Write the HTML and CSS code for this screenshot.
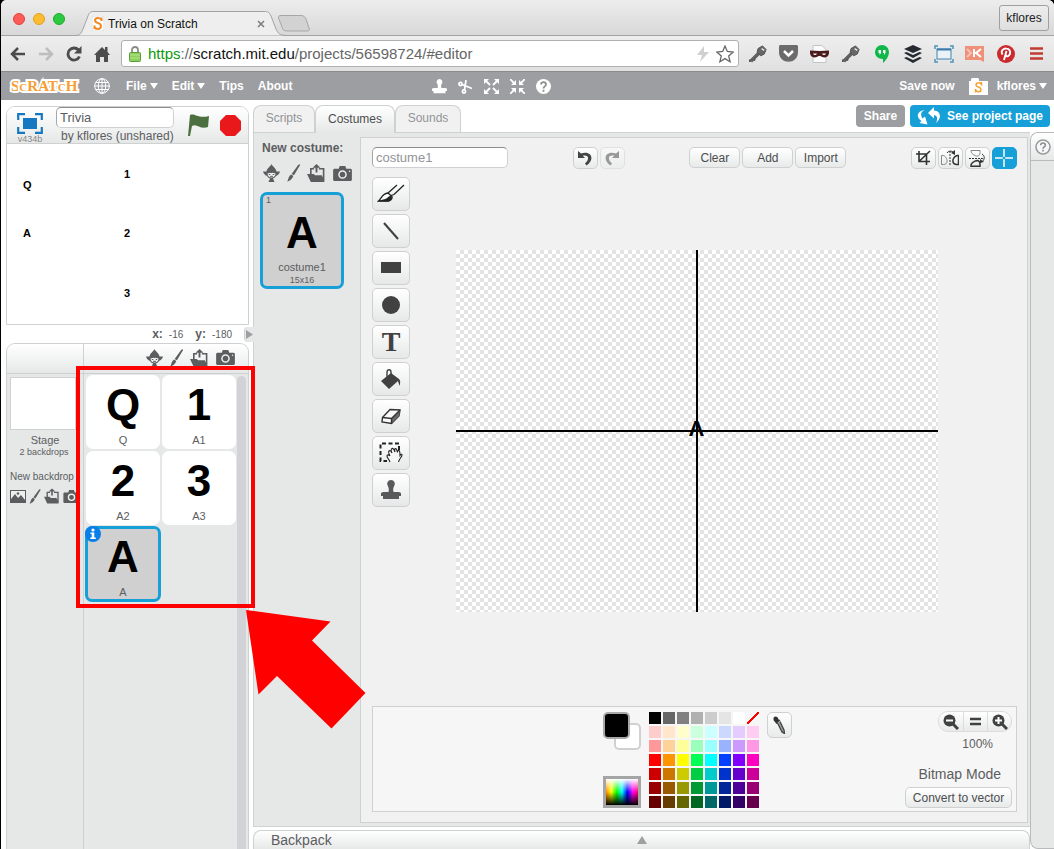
FILE: index.html
```html
<!DOCTYPE html>
<html lang="en">
<head>
<meta charset="utf-8">
<title>Trivia on Scratch</title>
<link rel="stylesheet" href="styles.css">
</head>
<body>
<svg class="defs" aria-hidden="true">
  <symbol id="face" viewBox="0 0 17 18"><path d="M8.500 0c1 2.500 4.500 4 5 7.500h3.500c-.5 2-2 3.500-4 4.500-1 1.500-2 2-3 2.500l1.500 3.500h-6L7 14.500C6 14 5 13.500 4 12 2 11 .5 9.500 0 7.500h3.500C4 4 7.500 2.500 8.500 0z" fill="#5c5d5f"/><path d="M4.500 9.500l3-.8 1 .6 1-.6 3 .8c0 2.700-2 4-4 4s-4-1.300-4-4z" fill="#f4f4f4"/><path d="M5.800 10.500h1.500M9.700 10.500h1.500M7 12.300h3" stroke="#5c5d5f"/></symbol>
  <symbol id="brush" viewBox="0 0 14 19"><path d="M13.500 0c.6.2.7.8.3 1.500L7.500 12 5 10.500 12 1z M4.500 11l2.300 1.600C6 15.500 3.500 17.500 0 19c1.500-2 1.500-6.500 4.500-8z" fill="#5c5d5f"/></symbol>
  <symbol id="upload" viewBox="0 0 20 19"><path d="M7.500 5H4v6M12.500 5H17.500v12" fill="none" stroke="#5c5d5f" stroke-width="1.700"/><path d="M10 0l4.200 4H11v5H9V4H5.800z" fill="#5c5d5f"/><path d="M0 10.500h7l1.500 1.500H15.500l2.800 5v2H4z" fill="#5c5d5f"/></symbol>
  <symbol id="camera" viewBox="0 0 20 16"><path d="M1 3h5l1-3h6l1 3h5l1 1v11l-1 1H1l-1-1V4z" fill="#5c5d5f"/><circle cx="10" cy="9" r="3.800" fill="none" stroke="#eee" stroke-width="1.600"/><circle cx="17.500" cy="5.500" r=".8" fill="#eee"/></symbol>
  <symbol id="stamp" viewBox="0 0 20 20"><path d="M10 0a4 4 0 0 1 3 6.500c-1 1.500-1 3-.5 5.500H18l2 1v3h-2v3H2v-3H0v-3l2-1h5.500c.5-2.500.5-4-.5-5.500A4 4 0 0 1 10 0z" fill="currentColor"/></symbol>
  <symbol id="key" viewBox="0 0 20 20"><path d="M2 18L12 8" stroke="#606060" stroke-width="4"/><path d="M10 4l5-3 4 4-2 5-4 2-4-4z" fill="#666" stroke="#4e4e4e"/><path d="M14 4l3 2" stroke="#e6e6e6" stroke-width="1.500"/><path d="M1 19v-3M5 16l2 1" stroke="#555" stroke-width="2"/></symbol>
</svg>

<header class="tabstrip">
  <div class="lights"><i class="red"></i><i class="yellow"></i><i class="green"></i></div>
  <div class="browser-tab">
    <svg class="tab-shape" viewBox="0 0 212 25" preserveAspectRatio="none"><path d="M0 24.500C6 24.500 6 22 8 18L13 5C14 1 16 .5 19 .5H189C193 .5 194 1 196 5L201 18C203 22 204 24.500 212 24.500" fill="#eeeeee" stroke="#a3a3a3"/></svg>
    <svg class="favicon" viewBox="0 0 12 15"><rect width="12" height="15" rx="2" fill="#fff" stroke="#ddd"/><path d="M9.500 1.500V5M9.500 4C8 1 3 1.500 3 4.500c0 3.500 6 1.500 6 5.500 0 3.500-5 4-6.500 1M2.500 9.500V13" fill="none" stroke="#f08b27" stroke-width="2"/></svg>
    <span>Trivia on Scratch</span>
    <button class="tab-close" aria-label="Close tab"><svg viewBox="0 0 8 8"><path d="M1 1l6 6M7 1L1 7" stroke="#7a7a7a" stroke-width="1.500"/></svg></button>
  </div>
  <button class="new-tab" aria-label="New tab"><svg viewBox="0 0 34 17"><path d="M4 .5H24C27 .5 28 2 29 4L32 13C33 15 32 16 30 16H10C7 16 6 15 5 12L1.500 3C1 1 2 .5 4 .5z" fill="#d2d2d2" stroke="#a6a6a6"/></svg></button>
  <button class="profile">kflores</button>
</header>

<nav class="toolbar">
  <button class="nav-btn" aria-label="Back"><svg width="16" height="14" viewBox="0 0 16 14"><path d="M8 1L2 7l6 6M2 7h13" fill="none" stroke="#4c4c4c" stroke-width="2.500"/></svg></button>
  <button class="nav-btn" aria-label="Forward"><svg width="16" height="14" viewBox="0 0 16 14"><path d="M8 1l6 6-6 6M14 7H1" fill="none" stroke="#bdbdbd" stroke-width="2.500"/></svg></button>
  <button class="nav-btn" aria-label="Reload"><svg width="16" height="16" viewBox="0 0 16 16"><path d="M12.500 4A6 6 0 1 0 13.500 10.500" fill="none" stroke="#4c4c4c" stroke-width="2.800"/><path d="M15.500 0v7.500H8z" fill="#4c4c4c"/></svg></button>
  <button class="nav-btn" aria-label="Home"><svg width="16" height="16" viewBox="0 0 16 16"><path d="M0 9l8-8 3 3V1h2.500v5L16 9h-2v7h-4v-5H6v5H2V9z" fill="#4c4c4c"/></svg></button>
  <div class="address">
    <svg width="12" height="16" viewBox="0 0 12 16"><path d="M3 8V4c0-4 6-4 6 0v4" fill="none" stroke="#8b8b8b" stroke-width="1.800"/><rect x=".5" y="6.500" width="11" height="9" rx="1" fill="#8ed05c" stroke="#5c9b3c"/><path d="M1 9h10M1 12h10" stroke="#b4e48f"/></svg>
    <span class="url"><span class="secure">https</span>://<span class="host">scratch.mit.edu</span>/projects/56598724/#editor</span>
    <svg width="12" height="16" viewBox="0 0 12 16"><path d="M7 0L0 9h5l-2 7 9-10H7z" fill="#d0d0d0"/></svg>
    <svg width="18" height="18" viewBox="0 0 18 18"><path d="M9 1l2.300 5.500 5.900.5-4.500 3.900 1.400 5.800L9 13.600l-5.100 3.100 1.400-5.800L.8 7l5.900-.5z" fill="#fff" stroke="#686868" stroke-width="1.300"/></svg>
  </div>
  <div class="extensions">
    <button aria-label="Key"><svg width="18" height="18"><use href="#key"/></svg></button>
    <button aria-label="Pocket"><svg width="19" height="17" viewBox="0 0 19 17"><path d="M0 1l1-1h17l1 1v6c0 13-19 13-19 0z" fill="#6b6b6b"/><path d="M5 6l4.500 4.500L14 6" fill="none" stroke="#fff" stroke-width="2.500"/></svg></button>
    <button aria-label="Mask"><svg width="19" height="18" viewBox="0 0 19 18"><path d="M3 .5h9l4 4v13H3z" fill="#fafafa" stroke="#c4c4c4"/><path d="M0 5.500c6 .5 13 .5 19 0 1 8-6 8-8.500 5.500h-2C6 13.500-1 13.500 0 5.500z" fill="#4c1c1c"/><path d="M3 8.500h4l-1 1.500H4zM12 8.500h4L15 10h-2z" fill="#eee"/></svg></button>
    <button aria-label="Key"><svg width="18" height="18"><use href="#key"/></svg></button>
    <button aria-label="Hangouts"><svg width="16" height="18" viewBox="0 0 16 18"><path d="M8 0a7 7 0 0 1 7 7c0 5-4 9-6 11v-4C4 14 1 11 1 7a7 7 0 0 1 7-7z" fill="#10b849"/><path d="M4.500 5H7v3L5.500 10V8h-1zM9 5h2.500v3L10 10V8H9z" fill="#fff"/></svg></button>
    <button aria-label="Buffer"><svg width="18" height="18" viewBox="0 0 18 18"><path d="M9 0l9 4-9 4-9-4zM0 8l2.500-1L9 10l6.500-3L18 8l-9 5zM0 13l2.500-1L9 15l6.500-3L18 13l-9 5z" fill="#252b30"/></svg></button>
    <button aria-label="Capture"><svg width="20" height="18" viewBox="0 0 20 18"><path d="M1 4V1h3M16 1h3v3M19 14v3h-3M4 17H1v-3" fill="none" stroke="#4d93be" stroke-width="1.500"/><rect x="3" y="4" width="14" height="10" fill="#e9f2f7" stroke="#4184b1"/><path d="M3 4.500h14" stroke="#3a7cab" stroke-width="2"/></svg></button>
    <button aria-label="Klout"><svg width="19" height="16" viewBox="0 0 19 16"><path d="M0 0h19v16l-4-2H0z" fill="#f19078"/><path d="M2 3l4 4-4 4" fill="none" stroke="#f7c2b4" stroke-width="2"/><path d="M9 3v8M16 3l-5 4 5 4M10 7h3" fill="none" stroke="#fff" stroke-width="2"/></svg></button>
    <button aria-label="Pinterest"><svg width="18" height="18" viewBox="0 0 18 18"><circle cx="9" cy="9" r="9" fill="#cb2a2e"/><path d="M5.500 9.500C3 5.500 7 3.300 9.500 3.600c4 .3 4.500 4.500 2.500 6.800-1.500 1.600-3 .8-3.300-.4M9.500 6L7 15" fill="none" stroke="#fff" stroke-width="1.900"/></svg></button>
    <button aria-label="Menu"><svg width="13" height="13" viewBox="0 0 13 13"><path d="M0 1.500h13M0 6.500h13M0 11.500h13" stroke="#c23b30" stroke-width="2.600"/></svg></button>
  </div>
</nav>

<div class="scratch-bar">
  <a class="logo" href="#">S<small>C</small>RAT<small>C</small>H</a>
  <button class="globe" aria-label="Language"><svg width="16" height="16" viewBox="0 0 16 16"><g fill="none" stroke="#fff"><circle cx="8" cy="8" r="7.300"/><ellipse cx="8" cy="8" rx="3.700" ry="7.300"/><path d="M8 0v16M0 8h16M1.500 4.500h13M1.500 11.500h13"/></g></svg></button>
  <button class="menu">File <i class="caret"></i></button>
  <button class="menu">Edit <i class="caret"></i></button>
  <button class="menu">Tips</button>
  <button class="menu">About</button>
  <div class="cursor-tools">
    <button aria-label="Duplicate"><svg width="15" height="15"><use href="#stamp"/></svg></button>
    <button aria-label="Delete"><svg width="15" height="15" viewBox="0 0 15 15"><g fill="none" stroke="#fff" stroke-width="1.700"><circle cx="2.500" cy="5" r="1.600"/><circle cx="6" cy="12.500" r="1.600"/><path d="M4 5.500l10 4M6.500 11L8 1"/></g></svg></button>
    <button aria-label="Grow"><svg width="15" height="15" viewBox="0 0 15 15"><path d="M0 0h5L0 5zM15 0v5l-5-5zM0 15v-5l5 5zM15 15h-5l5-5z" fill="#fff"/><path d="M2 2l4 4M13 2L9 6M2 13l4-4M13 13L9 9" stroke="#fff" stroke-width="1.800"/></svg></button>
    <button aria-label="Shrink"><svg width="15" height="15" viewBox="0 0 15 15"><path d="M6 1v5H1zM9 1v5h5zM6 14V9H1zM9 14V9h5z" fill="#fff"/><path d="M0 0l4 4M15 0l-4 4M0 15l4-4M15 15l-4-4" stroke="#fff" stroke-width="1.800"/></svg></button>
    <button aria-label="Block help"><svg width="15" height="15" viewBox="0 0 15 15"><circle cx="7.500" cy="7.500" r="7.500" fill="#fff"/><path d="M5 5.500c0-3.300 5-3.300 5 0 0 2-2.500 1.800-2.500 4M7.500 10.800v2" fill="none" stroke="#8d8f92" stroke-width="1.800"/></svg></button>
  </div>
  <button class="menu">Save now</button>
  <button class="folder" aria-label="My stuff"><svg width="19" height="17" viewBox="0 0 19 17"><path d="M0 3h2V1l1-1h6l1 1v2h9v14H0z" fill="#fff"/><path d="M12.500 4v3.500M12.500 6.500C11 4 7 4.500 7 7c0 2.600 5 1.500 5 4.500 0 2.800-4 3-5.500.5M6.500 11v3.500" fill="none" stroke="#f5a02c" stroke-width="1.500"/></svg></button>
  <button class="menu">kflores <i class="caret"></i></button>
</div>

<main class="workspace">
  <section class="left">
    <div class="stage-panel">
      <div class="stage-head">
        <button class="fullscreen" aria-label="Full screen"><svg width="26" height="21" viewBox="0 0 26 21"><path d="M1.200 7V1.200H8M18 1.200h6.800V7M24.800 14v5.800H18M8 19.800H1.200V14" fill="none" stroke="#1678c0" stroke-width="2.200"/><rect x="6" y="5" width="14" height="11" fill="#1678c0"/></svg><span>v434b</span></button>
        <div class="title"><input type="text" value="Trivia" aria-label="Project name"><span>by kflores (unshared)</span></div>
        <button class="flag" aria-label="Start"><svg width="21" height="22" viewBox="0 0 21 22"><path d="M2 1c5-2 8 4 19 1l-1 11c-8 3-11-4-16-1L2 22H0z" fill="#4c7040"/></svg></button>
        <button class="stop" aria-label="Stop"><svg width="21" height="21" viewBox="0 0 21 21"><path d="M6 0h9l6 6v9l-6 6H6l-6-6V6z" fill="#e9191b"/></svg></button>
      </div>
      <div class="stage">
        <b class="q">Q</b><b class="a">A</b><b class="n1">1</b><b class="n2">2</b><b class="n3">3</b>
      </div>
    </div>
    <div class="coords"><b>x:</b><span>-16</span><b>y:</b><span>-180</span></div>
    <button class="resize" aria-label="Small stage"><svg width="7" height="9" viewBox="0 0 7 9"><path d="M0 0l7 4.500L0 9z" fill="#9d9fa2"/></svg></button>
    <div class="sprite-panel">
      <div class="sprite-head">
        <div class="sprite-head-stage"></div>
        <div class="sprite-new">
          <button aria-label="Choose sprite"><svg width="17" height="18"><use href="#face"/></svg></button>
          <button aria-label="Paint sprite"><svg width="13" height="18"><use href="#brush"/></svg></button>
          <button aria-label="Upload sprite"><svg width="19" height="18"><use href="#upload"/></svg></button>
          <button aria-label="Camera sprite"><svg width="19" height="15"><use href="#camera"/></svg></button>
        </div>
      </div>
      <div class="sprite-body">
        <div class="backdrops">
          <div class="thumb"></div>
          <span class="stage-name">Stage</span>
          <span class="count">2 backdrops</span>
          <span class="new">New backdrop</span>
          <div class="backdrop-icons">
            <button aria-label="Choose backdrop"><svg width="16" height="13" viewBox="0 0 16 13"><path d="M0 0h16v13H0z" fill="#5c5d5f"/><path d="M1 9l4-5 3 4 3-3 4 5V1H1z" fill="#eee"/><circle cx="8" cy="3.500" r="1.300" fill="#5c5d5f"/></svg></button>
            <button aria-label="Paint backdrop"><svg width="12" height="15"><use href="#brush"/></svg></button>
            <button aria-label="Upload backdrop"><svg width="16" height="16"><use href="#upload"/></svg></button>
            <button aria-label="Camera backdrop"><svg width="17" height="13"><use href="#camera"/></svg></button>
          </div>
        </div>
        <div class="sprites">
          <button class="sprite"><b>Q</b><span>Q</span></button>
          <button class="sprite"><b>1</b><span>A1</span></button>
          <button class="sprite"><b>2</b><span>A2</span></button>
          <button class="sprite"><b>3</b><span>A3</span></button>
          <button class="sprite selected"><b>A</b><span>A</span><svg class="info" viewBox="0 0 16 16"><circle cx="8" cy="8" r="8" fill="#0b7fe8"/><circle cx="8" cy="4" r="1.600" fill="#fff"/><path d="M5.500 6.500H9.300V11.500H10.800V13H5.300V11.500H6.700V8H5.500z" fill="#fff"/></svg></button>
        </div>
        <div class="scroll"></div>
      </div>
    </div>
  </section>

  <section class="right">
    <div class="tabs-row">
      <button class="tab">Scripts</button>
      <button class="tab active">Costumes</button>
      <button class="tab">Sounds</button>
      <button class="share">Share</button>
      <button class="see"><svg width="24" height="18" viewBox="0 0 24 18"><path d="M8 3C4 4 3 8 5.500 11.500L8 9.500l2.500 8L2.500 16l2-2C-1.500 10 0 4 8 3z" fill="#fff"/><path d="M11 6L17 0v3.500c7 .5 8 7.500 2 12.500 2-4 1.500-7.500-2-8v3.500z" fill="#fff"/></svg>See project page</button>
    </div>
    <div class="lower">
      <div class="center">
        <div class="editor">
          <aside class="costumes">
            <h2>New costume:</h2>
            <div class="costume-icons">
              <button aria-label="Choose costume"><svg width="17" height="18"><use href="#face"/></svg></button>
              <button aria-label="Paint costume"><svg width="13" height="18"><use href="#brush"/></svg></button>
              <button aria-label="Upload costume"><svg width="19" height="18"><use href="#upload"/></svg></button>
              <button aria-label="Camera costume"><svg width="19" height="15"><use href="#camera"/></svg></button>
            </div>
            <button class="costume"><small>1</small><b>A</b><span>costume1</span><em>15x16</em></button>
          </aside>
          <div class="paint">
            <div class="paint-top">
              <input type="text" value="costume1" aria-label="Costume name">
              <div class="group">
                <button class="sq" aria-label="Undo"><svg width="16" height="16" viewBox="0 0 16 16"><path d="M1 1v7h7L5.800 5.800C11 4.500 13.500 8.500 8 13.500L9.500 15.500C18 10 15 0 4 3.500z" fill="#444"/></svg></button>
                <button class="sq faded" aria-label="Redo"><svg width="16" height="16" viewBox="0 0 16 16"><path d="M15 1v7H8l2.200-2.200C5 4.500 2.500 8.500 8 13.500L6.500 15.500C-2 10 1 0 12 3.500z" fill="#444"/></svg></button>
              </div>
              <div class="group">
                <button class="wide">Clear</button><button class="wide">Add</button><button class="wide">Import</button>
              </div>
              <div class="group">
                <button class="sq" aria-label="Crop"><svg width="16" height="16" viewBox="0 0 16 16"><path d="M4 1v10.500h11M1 4h10.500v11M4 11.500L15 1" fill="none" stroke="#333" stroke-width="1.600"/></svg></button>
                <button class="sq" aria-label="Flip left-right"><svg width="18" height="16" viewBox="0 0 18 16"><g fill="none" stroke="#333"><path d="M.5 5.500v9h2c4 0 4-4 3-6S3 5 .5 5.500z" stroke="#888"/><path d="M17.500 5.500v9h-2c-4 0-4-4-3-6s2.500-3.500 5-3z" stroke-width="1.500"/><path d="M9 1v15" stroke-dasharray="2 1"/><path d="M6 3c2-3 6-2 7 0"/></g><path d="M14 0v5l-4-2z" fill="#333"/></svg></button>
                <button class="sq" aria-label="Flip up-down"><svg width="17" height="17" viewBox="0 0 17 17"><g fill="none" stroke="#333"><path d="M2 .5h9v2c0 4-3 4-5 3S1.500 3 2 .500z" stroke="#888"/><path d="M2 16.200h9v-2c0-4-3-4-5-3s-4.500 2.500-4 5z" stroke-width="1.500"/><path d="M0 8.500h14" stroke-dasharray="2 1"/><path d="M13 4c3 2 3 5 0 8"/></g><path d="M11 13V9l4 3z" fill="#333"/></svg></button>
                <button class="sq on" aria-label="Set costume center"><svg width="18" height="18" viewBox="0 0 18 18"><path d="M9 0v18M0 9h18" stroke="#fff" stroke-width="1.500"/><circle cx="9" cy="9" r="1.300" fill="#179fd7"/></svg></button>
              </div>
            </div>
            <div class="paint-mid">
              <div class="tools">
                <button aria-label="Brush"><svg width="28" height="20" viewBox="0 0 28 20"><path d="M27 1L17 10.500l-3 1M20 1l-9 8" fill="none" stroke="#222" stroke-width="1.300"/><path d="M11 9l4 3.500c.5 3-2 4.500-4 4.500H1.500C5 14 5 9.500 11 9z" fill="#fff" stroke="#222" stroke-width="1.300"/><path d="M14.500 11.500c1 4-1 6-4.500 6H1l5-2c4 0 4-3 8.500-4z" fill="#222"/></svg></button>
                <button aria-label="Line"><svg width="16" height="18" viewBox="0 0 16 18"><path d="M1 1l14 16" stroke="#414141" stroke-width="2"/></svg></button>
                <button aria-label="Rectangle"><svg width="22" height="14" viewBox="0 0 22 14"><path d="M1 1h20v11H1z" fill="#414141"/></svg></button>
                <button aria-label="Ellipse"><svg width="18" height="18"><circle cx="9" cy="9" r="9" fill="#414141"/></svg></button>
                <button class="text-tool" aria-label="Text">T</button>
                <button aria-label="Fill"><svg width="20" height="21" viewBox="0 0 20 21"><path d="M6 9V3c0-3 4-3 4 0v4" fill="none" stroke="#414141" stroke-width="1.400"/><path d="M10 4l8 6c2 2 1 5 .5 7L17 12l-9 8-8-8z" fill="#414141"/></svg></button>
                <button aria-label="Erase"><svg width="20" height="17" viewBox="0 0 20 17"><path d="M1.500 9.500L9 1.500l10 .5-1 6-7.500 7.500-9.500-1.500z" fill="#fafafa" stroke="#333" stroke-width="1.400"/><path d="M10.500 10.500L19 2l-1 6-7.500 7.500z" fill="#6a6a6a"/><path d="M1.500 9.500l9 1L19 2M10.500 10.500v5" fill="none" stroke="#333" stroke-width="1.400"/></svg></button>
                <button aria-label="Select"><svg width="24" height="22" viewBox="0 0 24 22"><path d="M20 8V1.500H1.500V19H8" fill="none" stroke="#222" stroke-width="2" stroke-dasharray="4 2.500"/><path d="M11 20c-1-3-3-4-3-6 0-1.500 2-1.500 3 0-1-2-2-4-1-5s2 0 3 2c-1-2-1-4 0-4.500s2 1 3 3.500c-.5-2-.5-3.500.5-3.500s1.500 1.500 2 4c0-1.500.5-2.500 1.500-2 1 .5 1 3 1 5 1-1.500 2-1.500 2-.5 0 2-3 4-3.500 7" fill="#f6f6f6" stroke="#222" stroke-width="1.100"/></svg></button>
                <button class="stamp-tool" aria-label="Stamp"><svg width="20" height="20"><use href="#stamp"/></svg></button>
              </div>
              <div class="canvas"><b>A</b></div>
            </div>
            <div class="paint-bottom">
              <div class="colors">
                <div class="current">
                  <div class="swatches"><i class="back"></i><i class="front"></i></div>
                  <button class="spectrum" aria-label="Color spectrum"></button>
                </div>
                <div class="palette" id="palette"></div>
                <button class="sq dropper" aria-label="Pick up color"><svg width="13" height="18" viewBox="0 0 13 18"><path d="M1 1c2-1.500 4 0 4.500 2.500l2 .5-4 4-1.500-2C.5 5 0 3 1 1z" fill="#333"/><path d="M4.500 7l4.500 9 2.500 1.500-.5-3.500-4-8.500" fill="#999" stroke="#444" stroke-width="1.300"/></svg></button>
              </div>
              <div class="mode">
                <div class="zoom">
                  <button aria-label="Zoom out"><svg width="16" height="16" viewBox="0 0 16 16"><circle cx="6.500" cy="6.500" r="6" fill="#414141"/><path d="M10 10l5 5" stroke="#414141" stroke-width="3"/><path d="M3 6.500h7" stroke="#fff" stroke-width="2"/></svg></button>
                  <button aria-label="Actual size"><svg width="11" height="9" viewBox="0 0 11 9"><path d="M0 2h11M0 7h11" stroke="#414141" stroke-width="2.500"/></svg></button>
                  <button aria-label="Zoom in"><svg width="16" height="16" viewBox="0 0 16 16"><circle cx="6.500" cy="6.500" r="6" fill="#414141"/><path d="M10 10l5 5" stroke="#414141" stroke-width="3"/><path d="M3 6.500h7M6.500 3v7" stroke="#fff" stroke-width="2"/></svg></button>
                </div>
                <span class="percent">100%</span>
                <span class="mode-name">Bitmap Mode</span>
                <button class="wide">Convert to vector</button>
              </div>
            </div>
          </div>
        </div>
        <div class="backpack"><span>Backpack</span><i></i></div>
      </div>
      <aside class="help"><button aria-label="Help"><svg width="16" height="16" viewBox="0 0 16 16"><circle cx="8" cy="8" r="7" fill="#f8f8f8" stroke="#999b9e" stroke-width="1.600"/><path d="M5.700 6.300c0-3 4.600-3 4.600 0 0 1.700-2.300 1.500-2.300 3.500M8 10.800v1.800" fill="none" stroke="#8b8d90" stroke-width="1.600"/></svg></button></aside>
    </div>
  </section>
</main>

<div class="highlight"></div>
<svg class="arrow" viewBox="0 0 120 119"><path d="M0 0L84.500 11.500 66 30.500 119.500 83 85.500 118.500 31 66 12.500 84.500z" fill="#f00"/></svg>
<script src="palette.js"></script>
</body>
</html>
```

FILE: styles.css
```css
* { box-sizing: border-box; }
html { background: #000; }
body {
  margin: 0;
  height: 100vh;
  min-height: 720px;
  position: relative;
  display: flex;
  flex-direction: column;
  border-left: 1px solid #000;
  border-radius: 6px 6px 0 0;
  background: #fff;
  overflow: hidden;
  font-family: "Liberation Sans", Arial, sans-serif;
  font-size: 12px;
  color: #5c5d5f;
}
button, input { font: inherit; color: inherit; }
button {
  margin: 0;
  padding: 0;
  border: 0;
  background: none;
  display: flex;
  align-items: center;
  justify-content: center;
}
svg { display: block; flex: none; }
.defs { position: absolute; width: 0; height: 0; }

/* Browser chrome */
.tabstrip {
  height: 36px;
  flex: none;
  display: flex;
  align-items: flex-end;
  background: linear-gradient(#ededed, #d8d8d8);
  border-bottom: 1px solid #a3a3a3;
}
.lights { display: flex; gap: 8px; align-self: center; padding: 3px 0 0 12px; width: 74px; }
.lights i { width: 12px; height: 12px; border-radius: 50%; }
.red { background: #fc5b57; border: 1px solid #e2443f; }
.yellow { background: #fdbc2f; border: 1px solid #e0a026; }
.green { background: #2bc840; border: 1px solid #1dad2b; }
.browser-tab {
  position: relative;
  width: 212px;
  height: 25px;
  margin-bottom: -1px;
  padding: 0 17px 0 17px;
  display: flex;
  align-items: center;
  gap: 4px;
  color: #111;
}
.tab-shape { position: absolute; inset: 0; width: 100%; height: 100%; }
.favicon { position: relative; width: 12px; height: 15px; }
.browser-tab span { position: relative; flex: 1; }
.tab-close { position: relative; padding-right: 5px; }
.tab-close svg { width: 8px; height: 8px; }
.new-tab { margin: 0 0 3px -10px; }
.new-tab svg { width: 34px; height: 17px; }
.profile {
  margin: 0 5px 4px auto;
  width: 50px;
  height: 26px;
  border: 1px solid #a0a0a0;
  border-radius: 3px;
  background: linear-gradient(#ededed, #dedede);
  color: #222;
}
.toolbar {
  height: 36px;
  flex: none;
  display: flex;
  align-items: center;
  padding: 0 2px 0 3px;
  background: linear-gradient(#eeeeee, #e0e0e0);
  border-bottom: 1px solid #888c87;
}
.nav-btn { width: 28px; height: 28px; }
.address {
  flex: 1;
  height: 27px;
  margin-left: 5px;
  padding: 0 4px 0 7px;
  display: flex;
  align-items: center;
  gap: 7px;
  background: #fff;
  border: 1px solid #b0b0b0;
  border-radius: 3px;
  font-size: 15px;
  color: #666;
}
.url { flex: 1; }
.secure { color: #0b9a0b; }
.host { color: #111; }
.extensions { display: flex; margin-left: 3px; }
.extensions button { width: 31px; height: 28px; }

/* Scratch menu */
.scratch-bar {
  height: 28px;
  flex: none;
  display: flex;
  align-items: center;
  padding: 0 7px 0 10px;
  background: #9c9ea2;
  color: #fff;
  font-weight: bold;
}
.logo {
  width: 83px;
  font: bold 15px/20px "Liberation Serif", serif;
  color: #f79e34;
  text-decoration: none;
  -webkit-text-stroke: 4px #fff;
  paint-order: stroke fill;
}
.logo small { font-size: 11px; }
.globe { margin-right: 16px; }
.menu { gap: 3px; margin-right: 14px; }
.caret { border: solid transparent; border-width: 6px 4px 0; border-top-color: #fff; }
.cursor-tools { display: flex; margin-left: 120px; flex: 1; }
.cursor-tools button { width: 26px; height: 20px; }
.folder { margin-right: 9px; }
.menu:last-child { margin-right: 0; }

/* Workspace */
.workspace { flex: 1; min-height: 0; display: flex; padding: 5px 0 0 5px; }
.left { width: 243px; flex: none; position: relative; display: flex; flex-direction: column; margin-right: 4px; }
.stage-panel { border: 1px solid #cfd0d2; border-radius: 9px 9px 0 0; overflow: hidden; margin-top: 1px; }
.stage-head {
  height: 37px;
  display: flex;
  align-items: center;
  padding: 0 7px 0 7px;
  background: linear-gradient(#fff, #e6e8e8);
  border-bottom: 1px solid #cfd0d2;
}
.fullscreen { flex-direction: column; width: 32px; padding-top: 7px; }
.fullscreen span { font-size: 9px; line-height: 10px; color: #888; }
.title { flex: 1; margin: 0 14px 0 10px; line-height: 16px; white-space: nowrap; }
.title span { display: block; padding-left: 5px; }
input {
  display: block;
  height: 21px;
  padding: 0 3px;
  border: 1px solid #cfd0d2;
  border-top-color: #8b8c8e;
  border-left-color: #a5a6a8;
  border-radius: 5px;
  background: #fff;
  font-size: 13px;
}
.title input { width: 100%; }
.flag { margin-right: 11px; }
.stage { height: 180px; position: relative; background: #fff; color: #000; }
.stage b { position: absolute; font-size: 11px; line-height: 12px; }
.q { left: 16px; top: 35px; }
.a { left: 16px; top: 83px; }
.n1 { left: 117px; top: 24px; }
.n2 { left: 117px; top: 83px; }
.n3 { left: 117px; top: 143px; }
.coords { height: 18px; display: flex; align-items: center; justify-content: flex-end; gap: 6px; padding-right: 17px; font-size: 10px; }
.coords b { font-size: 12px; }
.coords span + b { margin-left: 6px; }
.resize {
  position: absolute;
  left: 238px;
  top: 222px;
  width: 10px;
  height: 15px;
  background: #e6e8e8;
  border-left: 1px solid #cfd0d2;
  border-radius: 4px 0 0 4px;
}
.sprite-panel {
  flex: 1;
  min-height: 0;
  display: flex;
  flex-direction: column;
  border: 1px solid #cfd0d2;
  border-bottom: 0;
  border-radius: 9px 9px 0 0;
  overflow: hidden;
  background: #e6e8e8;
}
.sprite-head { height: 30px; flex: none; display: flex; background: linear-gradient(#fff, #e6e8e8); border-bottom: 1px solid #cfd0d2; }
.sprite-head-stage { width: 77px; border-right: 1px solid #cfd0d2; }
.sprite-new { flex: 1; display: flex; align-items: center; justify-content: flex-end; gap: 7px; padding: 0 13px 2px 0; }
.sprite-body { flex: 1; display: flex; min-height: 0; }
.backdrops { width: 77px; padding: 3px 7px 0 3px; border-right: 1px solid #cfd0d2; display: flex; flex-direction: column; overflow: hidden; white-space: nowrap; }
.thumb { height: 53px; background: #fff; border: 1px solid #cfd0d2; }
.stage-name { font-size: 11px; line-height: 13px; margin-top: 4px; text-align: center; padding-left: 4px; }
.count { font-size: 9px; line-height: 11px; text-align: center; padding-left: 2px; }
.new { font-size: 10px; line-height: 12px; margin-top: 13px; }
.backdrop-icons { display: flex; align-items: center; gap: 3px; margin-top: 5px; overflow: hidden; }
.sprites { flex: 1; padding: 0 0 0 1px; display: grid; grid-template-columns: 76px 76px; grid-auto-rows: 76px; }
.sprite {
  position: relative;
  flex-direction: column;
  justify-content: flex-start;
  margin: 1px;
  padding-top: 4px;
  border-radius: 7px;
  background: #fff;
  color: #000;
}
.sprite b { font-size: 44px; line-height: 52px; }
.sprite span { font-size: 11px; line-height: 14px; margin-top: 2px; color: #5c5d5f; }
.sprite.selected { margin: 0; padding-top: 2px; border: 3px solid #179fd7; background: #d0d0d0; }
.info { position: absolute; left: -3px; top: -3px; width: 16px; height: 16px; }
.scroll { width: 9px; margin: 2px 2px 0 0; border-radius: 5px 5px 0 0; background: #d2d3d6; }

.right { flex: 1; min-width: 0; display: flex; flex-direction: column; }
.tabs-row { height: 28px; flex: none; display: flex; align-items: flex-start; padding-right: 4px; }
.tab {
  height: 27px;
  width: 62px;
  padding-bottom: 2px;
  border: 1px solid #cfd0d2;
  border-bottom: 0;
  border-radius: 8px 8px 0 0;
  background: #f1f1f1;
  color: #929497;
}
.tab:nth-child(3) { width: 66px; }
.tab.active { width: 80px; height: 28px; background: linear-gradient(#fff, #e6e8e8); color: #4c4d4f; position: relative; z-index: 1; }
.share, .see { height: 22px; border-radius: 4px; color: #fff; font-weight: bold; background: #9c9ea2; }
.share { width: 49px; margin: 0 5px 0 auto; }
.see { width: 140px; gap: 6px; background: #179fd7; }
.lower { flex: 1; min-height: 0; display: flex; margin-top: -1px; }
.center { flex: 1; min-width: 0; display: flex; flex-direction: column; }
.editor { flex: 1; min-height: 0; display: flex; padding: 4px 2px 3px 0; background: #e6e8e8; border: 1px solid #cfd0d2; border-right: 0; }
.costumes { width: 106px; flex: none; padding: 4px 8px 0 6px; }
h2 { margin: 0; padding-left: 2px; font-size: 12px; line-height: 14px; white-space: nowrap; }
.costume-icons { display: flex; align-items: center; gap: 7px; padding: 9px 0 10px 3px; }
.costume {
  position: relative;
  flex-direction: column;
  width: 84px;
  height: 97px;
  border: 3px solid #179fd7;
  border-radius: 7px;
  background: #d0d0d0;
}
.costume small { position: absolute; left: 3px; top: 0; font-size: 9px; }
.costume b { font-size: 44px; line-height: 44px; color: #000; margin-top: 16px; }
.costume span { font-size: 11px; line-height: 13px; margin-top: 6px; }
.costume em { font-style: normal; font-size: 9px; line-height: 12px; }
.paint { flex: 1; min-width: 0; display: flex; flex-direction: column; padding: 9px 10px 10px 11px; background: #f1f1f1; border: 1px solid #cfd0d2; }
.paint-top { display: flex; justify-content: space-between; margin-bottom: 8px; }
.paint-top input { width: 136px; color: #929497; }
.group { display: flex; gap: 2px; }
.sq, .wide {
  height: 21px;
  border: 1px solid #cfd0d2;
  border-radius: 5px;
  background: linear-gradient(#fff, #e8eaea);
}
.sq { width: 25px; height: 22px; }
.wide { width: 51px; color: #4c4d4f; }
.faded { opacity: .5; }
.sq.on { background: #179fd7; border-color: #179fd7; }
.paint-mid { flex: 1; min-height: 0; display: grid; grid-template-columns: 38px 1fr 34px; }
.tools { display: flex; flex-direction: column; gap: 3px; }
.tools button { height: 34px; border: 1px solid #cfd0d2; border-radius: 5px; background: linear-gradient(#fff, #e6e8e8); }
.tools .text-tool { font: bold 28px/30px "Liberation Serif", serif; color: #414141; }
.stamp-tool { color: #58595b; }
.canvas {
  width: 482px;
  height: 362px;
  place-self: center;
  margin-bottom: 21px;
  display: flex;
  align-items: center;
  justify-content: center;
  color: #000;
  background:
    linear-gradient(#000, #000) 50% 50% / 2px 100% no-repeat,
    linear-gradient(#000, #000) 50% 50% / 100% 2px no-repeat,
    conic-gradient(#e4e4e4 25%, #fff 0 50%, #e4e4e4 0 75%, #fff 0) 0 0 / 8px 8px;
}
.canvas b { font-size: 22px; line-height: 20px; padding-bottom: 4px; }
.paint-bottom {
  display: grid;
  grid-template-columns: 1fr auto 1fr;
  padding: 4px 4px 3px 10px;
  background: #f6f6f6;
  border: 1px solid #cfd0d2;
}
.colors { grid-column: 2; display: flex; gap: 8px; padding-top: 1px; }
.current { display: flex; flex-direction: column; justify-content: space-between; width: 38px; }
.swatches { display: grid; grid-template: 11px 27px / 11px 27px; }
.swatches i { width: 27px; height: 27px; border: 2px solid #d0d0d2; border-radius: 5px; }
.back { grid-area: 2 / 2; background: #fff; }
.swatches .front { grid-area: 1 / 1; background: #000; border-color: #a8a8a8; }
.spectrum {
  height: 32px;
  border: 3px solid #a5a5a5;
  background:
    linear-gradient(#fff, #fff0 50%, #0000 50%, #000),
    linear-gradient(90deg, #f80, #ff0, #0f0, #0ff, #00f, #f0f, #f06);
}
.palette { display: grid; grid-template-columns: repeat(8, 12px); grid-auto-rows: 12px; gap: 2px; }
.no-color { background: linear-gradient(135deg, #f6f6f6 44%, #f00 44% 56%, #f6f6f6 56%); }
.dropper { height: 26px; }
.mode { display: flex; flex-direction: column; align-items: flex-end; }
.zoom { display: flex; border: 1px solid #dcdcdc; border-radius: 10px; background: linear-gradient(#fff, #e8eaea); }
.zoom button { width: 24px; height: 19px; }
.zoom button + button { border-left: 1px solid #dcdcdc; }
.percent { margin-top: 5px; padding-right: 19px; line-height: 15px; }
.mode-name { margin: 14px 0 4px; padding-right: 11px; font-size: 14px; line-height: 17px; }
.mode .wide { width: 107px; }
.backpack {
  height: 19px;
  flex: none;
  margin-top: 3px;
  display: grid;
  grid-template-columns: 1fr auto 1fr;
  align-items: center;
  padding-left: 17px;
  padding-right: 17px;
  border: 1px solid #cfd0d2;
  border-bottom: 0;
  border-radius: 8px 8px 0 0;
  background: linear-gradient(#fff, #e6e8e8);
  font-size: 14px;
}
.backpack i { border: solid transparent; border-width: 0 5px 8px; border-bottom-color: #9d9fa2; }
.help { width: 24px; flex: none; border: 1px solid #b8babc; border-right: 0; border-radius: 8px 0 0 8px; background: #e6e8e8; overflow: hidden; }
.help button { width: 100%; height: 28px; background: linear-gradient(#fff, #e6e8e8); border-bottom: 1px solid #b8babc; }

/* Annotation over the sprite list */
.highlight { position: absolute; left: 75px; top: 366px; width: 179px; height: 242px; border: 4px solid #f00; }
.arrow { position: absolute; left: 245px; top: 610px; width: 120px; height: 119px; }
```

FILE: palette.js
```js
const rows = [
  "000000 666666 808080 b0b0b0 cccccc e5e5e5 ffffff none",
  "ffcccc ffe6cc ffffcc ccffdd ccffff ccd9ff e5ccff ffccf2",
  "ff9999 ffd299 ffff99 99ffbb 99ffff 99b3ff cc99ff ff99e5",
  "ff0000 ff9500 ffff00 00ff55 00ffff 0040ff 8000ff ff00c0",
  "cc0000 cc7700 cccc00 00cc44 00cccc 0033cc 6600cc cc0099",
  "990000 995900 999900 009933 009999 002699 4c0099 990073",
  "660000 663c00 666600 006622 006666 001966 330066 66004d"
];
const palette = document.getElementById("palette");
rows.join(" ").split(" ").forEach((hex) => {
  const cell = document.createElement("button");
  cell.setAttribute("aria-label", hex);
  if (hex === "none") cell.className = "no-color";
  else cell.style.backgroundColor = "#" + hex;
  palette.appendChild(cell);
});
```
